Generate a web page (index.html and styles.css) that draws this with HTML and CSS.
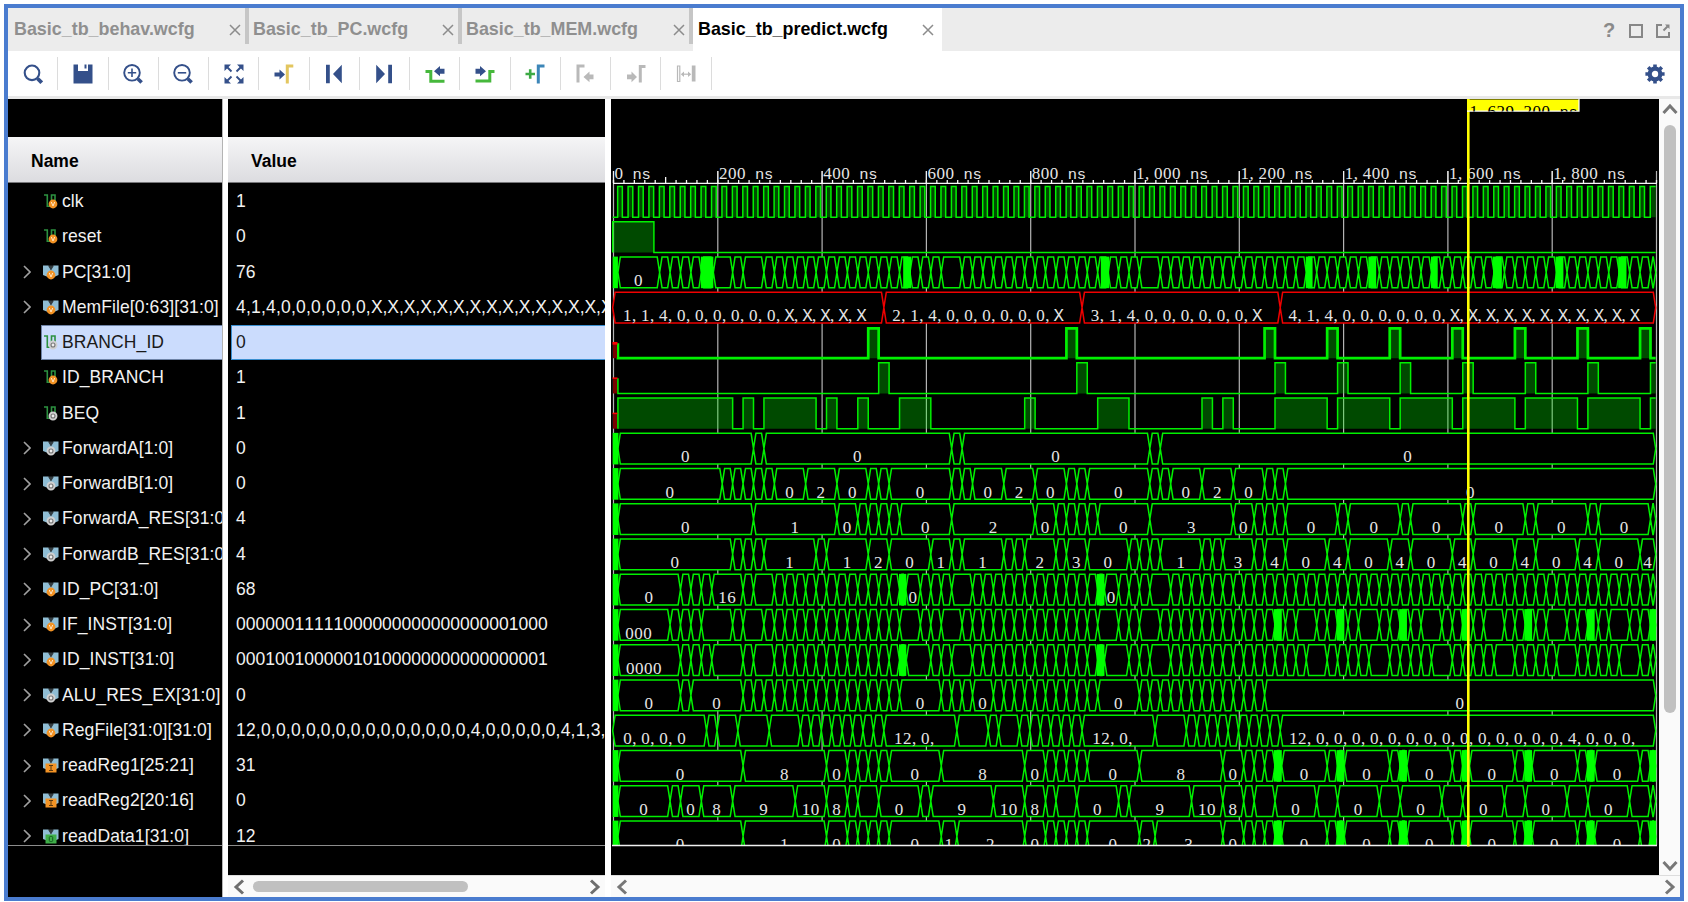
FILE: index.html
```
<!DOCTYPE html>
<html lang="en">
<head>
<meta charset="utf-8">
<title>Basic_tb_predict.wcfg</title>
<link rel="stylesheet" href="styles.css">
</head>
<body>
<svg class="defs" width="0" height="0">
  <symbol id="i-sig" viewBox="0 0 16 16"><path d="M1 2h3.300v11.300h3.400M8.500 10V2h3.500v8" fill="none" stroke="#2c9140" stroke-width="1.600"/></symbol>
  <symbol id="i-bus" viewBox="0 0 16 16"><path d="M0 1.500h5.500l2.400 4.300 2.400-4.300h5.200v9.500l-3.400 1.500h-8.400L0 11z" fill="#8fbdd4"/><path d="M5 1.500l3 5 3-5z" fill="#333c40"/></symbol>
  <symbol id="i-v" viewBox="0 0 10 10"><circle cx="5" cy="5" r="4.400" fill="#f39325"/><path d="M3.300 3l1.700 4 1.700-4" fill="none" stroke="#ffe6c4" stroke-width="1"/></symbol>
  <symbol id="i-g" viewBox="0 0 10 10"><circle cx="5" cy="5" r="3.500" fill="#777" stroke="#d0d0d0" stroke-width="1.900"/><circle cx="5" cy="5" r="1.400" fill="#eee"/></symbol>
  <symbol id="i-i" viewBox="0 0 12 10"><path d="M.5.500h11v9H.5z" fill="#f39325"/><path d="M4 2.500h4M4 7.500h4M6 2.500v5" stroke="#5d3a10" stroke-width="1"/></symbol>
  <symbol id="i-o" viewBox="0 0 12 10"><path d="M.5.500h11v9H.5z" fill="#3fae49"/><rect x="4.300" y="2.500" width="3.400" height="5" rx="1" fill="none" stroke="#145c22"/></symbol>
  <symbol id="i-x" viewBox="0 0 12 12"><path d="M1 1l10 10M11 1L1 11" stroke="#8c8c8c" stroke-width="1.500"/></symbol>
</svg>
<div class="window">
  <header class="tabs">
    <div class="tab t1"><span>Basic_tb_behav.wcfg</span><svg><use href="#i-x"/></svg></div>
    <div class="tab t2"><span>Basic_tb_PC.wcfg</span><svg><use href="#i-x"/></svg></div>
    <div class="tab t3"><span>Basic_tb_MEM.wcfg</span><svg><use href="#i-x"/></svg></div>
    <div class="tab t4 active"><span>Basic_tb_predict.wcfg</span><svg><use href="#i-x"/></svg></div>
    <div class="wincontrols">
      <span class="help">?</span>
      <svg width="14" height="14" viewBox="0 0 14 14"><path d="M1 1h12v12H1z" fill="none" stroke="#878787" stroke-width="2"/></svg>
      <svg width="14" height="14" viewBox="0 0 14 14"><path d="M6 1H1v12h12V8" fill="none" stroke="#878787" stroke-width="2"/><path d="M9 .5h4.500V5z" fill="#878787"/><path d="M7.500 6.500l4-4" stroke="#878787" stroke-width="2"/></svg>
    </div>
  </header>
  <nav class="toolbar">
    <div class="tool"><svg viewBox="0 0 20 20"><circle cx="9" cy="8.800" r="7.300" fill="none" stroke="#34508a" stroke-width="2.100"/><path d="M14.500 14.500l4.200 4.200" stroke="#34508a" stroke-width="3.800"/></svg></div>
    <div class="tool"><svg viewBox="0 0 20 20"><path d="M.5.500h4.500v6.500h10V.500h4.500v19H.5z" fill="#34508a"/><path d="M11.500.500h2v4h-2z" fill="#34508a"/></svg></div>
    <div class="tool"><svg viewBox="0 0 20 20"><circle cx="9" cy="8.800" r="7.800" fill="none" stroke="#34508a" stroke-width="1.900"/><path d="M4.800 8.800h8.400M9 4.600V13" stroke="#34508a" stroke-width="1.600"/><path d="M14.800 14.800l3.800 3.800" stroke="#34508a" stroke-width="3.600"/></svg></div>
    <div class="tool"><svg viewBox="0 0 20 20"><circle cx="9" cy="8.800" r="7.800" fill="none" stroke="#34508a" stroke-width="1.900"/><path d="M4.800 8.800h8.400" stroke="#34508a" stroke-width="1.600"/><path d="M14.800 14.800l3.800 3.800" stroke="#34508a" stroke-width="3.600"/></svg></div>
    <div class="tool"><svg viewBox="0 0 20 20"><path d="M.5.500h6.500L.5 7zM19.500.500H13L19.500 7zM.5 19.500H7L.5 13zM19.500 19.500H13l6.500-6.500z" fill="#34508a"/><path d="M3 3l4.500 4.500M17 3l-4.500 4.500M3 17l4.500-4.500M17 17l-4.500-4.500" stroke="#34508a" stroke-width="1.900"/></svg></div>
    <div class="tool"><svg viewBox="0 0 20 20"><path d="M.5 8.500h5V5.500L11 10.500l-5.500 5v-3h-5z" fill="#34508a"/><path d="M13.300 19.500V2h6" fill="none" stroke="#e3c65f" stroke-width="3"/></svg></div>
    <div class="tool"><svg viewBox="0 0 20 20"><path d="M2 .8h3.800v18.500H2zM17.800.8v18.500L9 10z" fill="#34508a"/></svg></div>
    <div class="tool"><svg viewBox="0 0 20 20"><path d="M14.200.8H18v18.500h-3.800zM2.200.8v18.500L11 10z" fill="#34508a"/></svg></div>
    <div class="tool"><svg viewBox="0 0 20 20"><path d="M19.500 4.700h-4.500V2L9 7.200l6 5.100V9.700h4.500z" fill="#34508a"/><path d="M.5 7.500h5.300v9.700h13.700" fill="none" stroke="#46b83c" stroke-width="3"/></svg></div>
    <div class="tool"><svg viewBox="0 0 20 20"><path d="M.5 4.700H5V2l6 5.200-6 5.100V9.700H.5z" fill="#34508a"/><path d="M.5 16.900h14.300V7.500h4.700" fill="none" stroke="#46b83c" stroke-width="3"/></svg></div>
    <div class="tool"><svg viewBox="0 0 20 20"><path d="M.5 10h9.500M5.200 5.200v9.600" stroke="#3daa45" stroke-width="2.600"/><path d="M13.300 19.500V2h6.200" fill="none" stroke="#3c86b8" stroke-width="3"/></svg></div>
    <div class="tool"><svg viewBox="0 0 20 20"><path d="M3 18.500V2h6.500" fill="none" stroke="#b9b9b9" stroke-width="3"/><path d="M18.500 10.500h-4V7.500l-6 5.500 6 5.300v-3h4z" fill="#b9b9b9"/></svg></div>
    <div class="tool"><svg viewBox="0 0 20 20"><path d="M1 10.500h4.500V7.500l5.500 5.500-5.500 5.300v-3H1z" fill="#b9b9b9"/><path d="M14.300 18.500V2.500h5.200" fill="none" stroke="#b9b9b9" stroke-width="3"/></svg></div>
    <div class="tool"><svg viewBox="0 0 20 20"><path d="M1.500 2h2.300v15.500H1.500z" fill="none" stroke="#b9b9b9" stroke-width="1.200"/><path d="M15.800 1.500h3.700v16h-3.700zM8 7.500v5.500L4.800 10.200zM12 7.500v5.500l3.200-2.800z" fill="#b9b9b9"/><path d="M6 10.200h8" stroke="#b9b9b9" stroke-width="1.200"/></svg></div>
    <svg class="gear" viewBox="0 0 20 20"><circle cx="10" cy="10" r="5.300" fill="none" stroke="#34508a" stroke-width="4.200"/><path d="M10 .4v4M10 15.600v4M.4 10h4M15.600 10h4M3.200 3.200L6 6M14 14l2.800 2.800M16.800 3.200L14 6M6 14l-2.800 2.800" stroke="#34508a" stroke-width="3.600"/></svg>
  </nav>
  <main class="body">
    <section class="names">
      <div class="blank"></div>
      <div class="colhead">Name</div>
      <div class="rows" id="names"></div>
    </section>
    <section class="values">
      <div class="blank"></div>
      <div class="colhead">Value</div>
      <div class="rows" id="values"></div>
      <div class="foot"></div>
      <div class="hscroll">
        <svg width="12" height="16" viewBox="0 0 12 16"><path d="M10 1.500L3 8l7 6.500" fill="none" stroke="#6e6e6e" stroke-width="3"/></svg>
        <i class="hthumb"></i>
        <svg class="right" width="12" height="16" viewBox="0 0 12 16"><path d="M2 1.500L9 8l-7 6.500" fill="none" stroke="#6e6e6e" stroke-width="3"/></svg>
      </div>
    </section>
    <section class="waves">
      <div class="upper">
        <svg id="wave" width="1048" height="776" viewBox="611 99 1048 776"></svg>
        <div class="vscroll">
          <svg width="16" height="12" viewBox="0 0 16 12"><path d="M1.500 10L8 3l6.500 7" fill="none" stroke="#777" stroke-width="3"/></svg>
          <i class="vthumb"></i>
          <svg class="down" width="16" height="12" viewBox="0 0 16 12"><path d="M1.500 2L8 9l6.500-7" fill="none" stroke="#777" stroke-width="3"/></svg>
        </div>
      </div>
      <div class="hscroll wide">
        <svg width="12" height="16" viewBox="0 0 12 16"><path d="M10 1.500L3 8l7 6.500" fill="none" stroke="#777" stroke-width="3"/></svg>
        <svg class="right" width="12" height="16" viewBox="0 0 12 16"><path d="M2 1.500L9 8l-7 6.500" fill="none" stroke="#777" stroke-width="3"/></svg>
      </div>
    </section>
  </main>
</div>
<script src="wave.js"></script>
</body>
</html>
```

FILE: styles.css
```
* { box-sizing: border-box; }
body { margin: 0; background: #fff; font-family: "Liberation Sans", Arial, sans-serif; overflow: hidden; }
.defs { display: block; position: absolute; }
.window { width: 1680px; height: 897px; margin: 4px 0 0 4px; border: 4px solid #4a7ccf; background: #fff; overflow: hidden; }
.tabs { display: flex; height: 43px; background: #ececec; }
.tab { display: flex; align-items: center; justify-content: space-between; border-right: 4px solid #c6c6c6; height: 36px; padding: 6px 4px 0 6px; font-weight: bold; font-size: 17.900px; color: #8f8f8f; white-space: nowrap; }
.tab svg { width: 12px; height: 12px; margin-top: 2px; }
.t1 { width: 241px; }
.t2 { width: 213px; padding-left: 4px; }
.t3 { width: 231px; padding-left: 4px; }
.t4 { width: 249px; height: 43px; border: 0; padding: 0 8px 1px 5px; background: #fff; color: #000; }
.wincontrols { display: flex; align-items: center; gap: 13px; margin-left: auto; margin-right: 10px; padding-top: 2px; }
.help { font-weight: bold; font-size: 20px; color: #8a8a8a; width: 13px; }
.toolbar { display: flex; align-items: center; height: 48px; border-bottom: 3px solid #e8e8e8; }
.tool { display: flex; width: 50.25px; height: 33px; justify-content: center; align-items: center; border-right: 1.500px solid #dcdcdc; }
.tool svg, .gear { width: 20px; height: 20px; }
.gear { margin-left: auto; margin-right: 15px; }
.body { display: grid; grid-template-columns: 215px 382px 1fr; height: 798px; }
.names { background: #000; border-right: 1px solid #b4b4b4; overflow: hidden; }
.values { border-left: 5px solid #fff; background: #000; overflow: hidden; }
.blank { height: 38px; }
.colhead { height: 46px; padding: 1px 23px 0; line-height: 46px; font-weight: bold; font-size: 17.500px; color: #000; background: linear-gradient(#f5f5f6, #dcdce0); border-bottom: 1px solid #77777a; }
.rows { height: 663px; padding-top: 0.600px; overflow: hidden; border-bottom: 1px solid #8c8c8c; color: #f2f2f2; font-size: 17.530px; font-kerning: none; white-space: nowrap; }
.row { display: flex; align-items: center; height: 35.250px; padding-top: 1px; }
.name { padding-left: 15px; letter-spacing: 0.100px; }
.chev { width: 8px; height: 14px; margin-right: 12px; flex: none; }
.glyph { width: 16px; height: 19px; flex: none; margin-right: 3px; }
.name .lab { display: flex; align-items: center; height: 100%; flex: 1; }
.name.selected { padding: 0 0 0 33px; }
.name.selected .lab { background: #cbdcfd; color: #1a1a1a; border: 1px solid #6e83a6; border-right: 0; padding-left: 1px; }
.value { padding-left: 8px; }
.value.selected { margin-left: 3px; padding-left: 4px; background: #cbdcfd; border: 1.500px solid #3a8fd0; border-right: 0; color: #1a1a1a; }
.value.list { letter-spacing: 0.190px; }
.value.list .x { letter-spacing: -0.060px; }
.foot { height: 29px; }
.hscroll { display: flex; align-items: center; height: 22px; background: #fafafa; border-top: 1px solid #ddd; padding: 0 4px 0 5px; }
.hthumb { width: 215px; height: 11px; border-radius: 6px; background: #c0c0c0; margin-left: 8px; }
.right { margin-left: auto; }
.waves { border-left: 6px solid #fff; }
.upper { display: flex; height: 776px; }
#wave { display: block; background: #000; flex: none; }
.vscroll { flex: 1; display: flex; flex-direction: column; align-items: center; background: #fafafa; padding: 4px 0 3px; }
.vthumb { width: 12px; height: 588px; border-radius: 6px; background: #c0c0c0; margin-top: 10px; }
.down { margin-top: auto; }
.num { font-family: "Liberation Serif", serif; font-size: 17px; fill: #e6e6e6; }
.num .m { font-family: "Liberation Mono", monospace; font-size: 15.500px; }
.num .cap { font-family: "Liberation Mono", monospace; font-size: 17.500px; }
.num.dark { fill: #000; }
```

FILE: wave.js
```
const rows = [
  ['clk', '1', 'v', 0], ['reset', '0', 'v', 0], ['PC[31:0]', '76', 'v', 1],
  ['MemFile[0:63][31:0]', '4,1,4,0,0,0,0,0,0,' + 'X,'.repeat(15), 'v', 1],
  ['BRANCH_ID', '0', 'g', 0], ['ID_BRANCH', '1', 'v', 0], ['BEQ', '1', 'g', 0],
  ['ForwardA[1:0]', '0', 'g', 1], ['ForwardB[1:0]', '0', 'g', 1],
  ['ForwardA_RES[31:0]', '4', 'g', 1], ['ForwardB_RES[31:0]', '4', 'g', 1],
  ['ID_PC[31:0]', '68', 'v', 1],
  ['IF_INST[31:0]', '00000011111000000000000000001000', 'v', 1],
  ['ID_INST[31:0]', '00010010000010100000000000000001', 'v', 1],
  ['ALU_RES_EX[31:0]', '0', 'g', 1],
  ['RegFile[31:0][31:0]', '12,' + '0,'.repeat(14) + '4,0,0,0,0,0,4,1,3,', 'v', 1],
  ['readReg1[25:21]', '31', 'i', 1], ['readReg2[20:16]', '0', 'i', 1], ['readData1[31:0]', '12', 'o', 1]
];
const badge = {
  v: x => `<use href="#i-v" x="${x}" y="7" width="10" height="10"/>`,
  g: x => `<use href="#i-g" x="${x}" y="7" width="10" height="10"/>`,
  i: () => '<use href="#i-i" x="2" y="7" width="12" height="10"/>',
  o: () => '<use href="#i-o" x="2" y="7" width="12" height="10"/>'
};
document.getElementById('names').innerHTML = rows.map(([n, , b, bus], i) => {
  const chev = i === 4 ? '' : `<svg class="chev" viewBox="0 0 8 14">${bus ? '<path d="M1 1l6 6-6 6" fill="none" stroke="#a0a0a0" stroke-width="1.6"/>' : ''}</svg>`;
  const glyph = `<svg class="glyph" viewBox="0 0 16 19"><use href="#${bus ? 'i-bus' : 'i-sig'}" x="0" y="1" width="16" height="16"/>${badge[b](bus ? 3 : 5)}</svg>`;
  const pad = i === 4 ? ' selected' : '';
  return `<div class="row name${pad}">${chev}<div class="lab">${glyph}<span>${n}</span></div></div>`;
}).join('');
document.getElementById('values').innerHTML = rows.map(([, v], i) => {
  const cls = (i === 4 ? ' selected' : '') + (v.includes(',') ? ' list' : '');
  return `<div class="row value${cls}"><span>${v.replace(/(X,)+/, '<span class="x">$&</span>')}</span></div>`;
}).join('');

// Time is counted in units of 10 ns.
const U = 5.215, X0 = 612.7;
const X = k => X0 + k * U;
const rowTop = i => 186.6 + i * 35.25;
const H = 30.6;
const GREEN = '#00f000';
const out = [];
const every = (a, b, s = 2) => { const r = []; for (let k = a; k <= b; k += s) r.push(k); return r; };

function chars(str, x, y, cls = '') {
  const xs = [...str].map((c, j) => (x + j * 9 + (c === 'X' ? -.8 : 0)).toFixed(1)).join(' ');
  const body = str.replace(/[a-z]+/g, '<tspan class="m">$&</tspan>').replace(/X/g, '<tspan class="cap">X</tspan>');
  out.push(`<text class="num ${cls}" x="${xs}" y="${y}" xml:space="preserve">${body}</text>`);
}

function bus(i, ks, labels = {}, fills = [], color = GREEN) {
  const t = rowTop(i), m = t + H / 2, b = t + H;
  let d = '';
  for (let j = 0; j < ks.length - 1; j++) {
    const a = X(ks[j]), e = X(ks[j + 1]), s = Math.min(2.4, (e - a) / 2);
    d += `M${a} ${m}L${a + s} ${t}H${e - s}L${e} ${m}L${e - s} ${b}H${a + s}Z`;
  }
  out.push(`<path d="${d}" fill="#000" stroke="${color}" stroke-width="1.5"/>`);
  for (const [a, e] of fills) out.push(`<rect x="${X(a)}" y="${t - .5}" width="${(e - a) * U}" height="${H + 1}" fill="#0f0"/>`);
  for (const key in labels) {
    const k = +key, n = ks[ks.indexOf(k) + 1], v = labels[key];
    if (Array.isArray(v)) chars(v[0], v[1], t + 29);
    else chars(v, (X(k) + X(n)) / 2 - v.length * 4.5 - .2, t + 29);
  }
}

function digital(i, pulses, w = 1.5, unknown = false) {
  const t = rowTop(i) + (w > 2 ? .8 : 0), b = rowTop(i) + H, m = (t + b) / 2;
  let d = unknown ? `M${X(1)} ${m}V${b}` : `M${X(0)} ${b}`;
  let f = '';
  for (const [a, e] of pulses) {
    d += `H${X(a)}V${t}H${X(e)}` + (e < 200 ? `V${b}` : '');
    f += `M${X(a)} ${b}V${t}H${X(e)}V${b}Z`;
  }
  if (pulses[pulses.length - 1][1] < 200) d += `H${X(200)}`;
  out.push(`<path d="${f}" fill="#00ff00" fill-opacity=".29"/><path d="${d}" fill="none" stroke="${GREEN}" stroke-width="${w}"/>`);
  if (unknown) out.push(`<rect x="613" y="${m}" width="4" height="${b - m}" fill="#700"/><path d="M612.5 ${m}h5" stroke="#f00" stroke-width="${w}"/>`);
}

// Ruler and grid
let grid = '', ticks = '';
for (let n = 0; n <= 10; n++) grid += `M${613.5 + n * 104.3} 171V845`;
for (let n = 0; n <= 100; n++) ticks += `M${613.5 + n * 10.43} ${n === 5 ? 177 : 180}V183`;
out.push(`<path d="${grid}" stroke="#b4b4b4" stroke-width="1.2"/>`);
out.push(`<path d="${ticks}M613 183.300H1657" stroke="#f6f6f6" stroke-width="1.300"/>`);
['0', '200', '400', '600', '800', '1,000', '1,200', '1,400', '1,600', '1,800'].forEach((s, n) => {
  out.push(`<path d="M${613.5 + n * 104.3} 171V183" stroke="#f0f0f0" stroke-width="1.2"/>`);
  chars(s + ' ns', 614.6 + n * 104.3, 179);
});

out.push('<clipPath id="view"><rect x="611" y="184" width="1047" height="661"/></clipPath><g clip-path="url(#view)">');
digital(0, every(0, 99, 1).map(n => [2 * n + .95, n === 99 ? 200 : 2 * n + 1.85]));
digital(1, [[0, 7.9]]);
bus(2, [1, 9, 11, 13, 15, 17, 19.3, 23, 25, ...every(29, 63), ...every(67, 99), ...every(101, 101), ...every(105, 199), 200],
  { 1: '0' }, [[0, 1], [16.9, 19.3], [55.7, 57.2], [93.6, 95.2], [132.9, 134.2], [144.9, 146.4], [156.9, 158.2], [168.8, 170.5], [180.8, 182.3], [192.8, 194.4]]);
bus(3, [0, 52, 90, 128, 200], {
  0: ['1,1,4,0,0,0,0,0,0,X,X,X,X,X', 623], 52: ['2,1,4,0,0,0,0,0,0,X', 892.3],
  90: ['3,1,4,0,0,0,0,0,0,X', 1090.700], 128: ['4,1,4,0,0,0,0,0,0,X,X,X,X,X,X,X,X,X,X,X', 1288.500]
}, [], '#f00000');
const loop = [137, 149, 161, 173, 185, 197];
digital(4, [49, 87, 125, ...loop].map(k => [k, k + 2]), 2.7, true);
digital(5, [51, 89, 127, 139, 151, 163, 175, 187, 199].map(k => [k, Math.min(200, k + 2)]), 1.5, true);
digital(6, [[1, 23], [25, 27], [29, 39], [41, 43], [47, 49], [55, 61], [79, 81], [93, 99], [113, 115], [117, 119],
  [127, 137], [139, 149], [151, 161], [163, 173], [175, 185], [187, 197], [199, 200]], 1.5, true);
const start = [[0, 1.1]];
bus(7, [1, 27, 29, 65, 67, 103, 105, 200], { 1: '0', 29: '0', 67: '0', 105: '0' }, start);
bus(8, [1, 21, 23, 25, 27, 29, 31, 37, 43, 49, 51, 53, 65, 67, 69, 75, 81, 87, 89, 91, 103, 105, 107, 113, 119, 125, 127, 129, 200],
  { 1: '0', 31: '0', 37: '2', 43: '0', 53: '0', 69: '0', 75: '2', 81: '0', 91: '0', 107: '0', 113: '2', 119: '0', 129: '0' }, start);
bus(9, [1, 27, 43, 47, 49, 51, 53, 55, 65, 81, 85, 87, 89, 91, 93, 103, 119, 123, 125, 127, 129, 139, 141, 151, 153, 163, 165, 175, 177, 187, 189, 199, 200],
  { 1: '0', 27: '1', 43: '0', 55: '0', 65: '2', 81: '0', 93: '0', 103: '3', 119: '0', 129: '0', 141: '0', 153: '0', 165: '0', 177: '0', 189: '0' }, start);
bus(10, [1, 23, 25, 27, 29, 39, 41, 49, 53, 61, 65, 67, 75, 77, 79, 85, 87, 91, 99, 101, 103, 105, 113, 115, 117, 123, 125, 129, 137, 141, 149, 153, 161, 165, 173, 177, 185, 189, 197, 200],
  { 1: '0', 29: '1', 41: '1', 49: '2', 53: '0', 61: '1', 67: '1', 79: '2', 87: '3', 91: '0', 105: '1', 117: '3', 125: '4', 129: '0', 137: '4', 141: '0', 149: '4', 153: '0', 161: '4', 165: '0', 173: '4', 177: '0', 185: '4', 189: '0', 197: '4' }, start);
bus(11, [1, 13, 15, 17, 19, 25, 27, ...every(31, 55), 56.2, 59, 61, 63, 65, ...every(69, 93), 94.3, 97, 99, 101, 103, ...every(107, 199), 200],
  { 1: '0', 19: '16', 56.2: '0', 94.3: '0' }, [...start, [54.9, 56.3], [92.8, 94.3]]);
const fills = [126.8, 138.8, 150.8, 162.8, 174.8, 186.8].map(k => [k, k + 1.5]).concat([[198.8, 200.1]]);
bus(12, [1, 11, 13, 15, 17, 23, 25, ...every(29, 55), 59, 61, 63, ...every(67, 93), 97, 99, 101, ...every(105, 127), 129, 131, 135, 137, 139,
  141, 143, 147, 149, 151, 153, 155, 159, 161, 163, 165, 167, 171, 173, 175, 177, 179, 183, 185, 187, 189, 191, 195, 197, 199, 200],
  { 1: ['000', 625.300] }, [...start, ...fills]);
bus(13, [1, 13, 15, 17, 19, 25, 27, ...every(31, 55), 56.3, 61, 63, 65, ...every(69, 93), 94.3, 99, 101, 103, ...every(107, 133),
  137, 139, 141, 143, 145, 149, 151, 153, 155, 157, 161, 163, 165, 167, 169, 173, 175, 177, 179, 181, 185, 187, 189, 191, 193, 197, 199, 200],
  { 1: ['0000', 626] }, [...start, [54.9, 56.3], [92.8, 94.3]]);
bus(14, [1, 13, 15, ...every(25, 55), 63, 65, 67, 69, ...every(73, 93), ...every(101, 125), 200],
  { 1: '0', 15: '0', 55: '0', 69: '0', 93: '0', 125: '0' }, start);
bus(15, [0, 18, 20, 24, 30, ...every(36, 52), 66, 72, 74, ...every(78, 90), 104, ...every(110, 128), 200],
  { 0: ['0,0,0,0', 623.300], 52: ['12,0,', 894], 90: ['12,0,', 1092.300], 128: ['12,' + '0,'.repeat(14) + '4,0,0,0,', 1289] });
const tail = [127, 128.3, 137, 139, 140.3, 149, 151, 152.3, 161, 163, 164.3, 173, 175, 176.3, 185, 187, 188.3, 197, 199, 200];
const tailLabels = { 128.3: '0', 140.3: '0', 152.3: '0', 164.3: '0', 176.3: '0', 188.3: '0' };
bus(16, [1, 25, 41, 45, 47, 49, 51, 53, 63, 79, 83, 85, 87, 89, 91, 101, 117, 121, 123, 125, ...tail],
  { 1: '0', 25: '8', 41: '0', 53: '0', 63: '8', 79: '0', 91: '0', 101: '8', 117: '0', ...tailLabels }, [...start, ...fills]);
bus(17, [1, 11, 13, 17, 23, 35, 41, 45, 47, 51, 59, 61, 73, 79, 83, 85, 89, 97, 99, 111, 117, 121, 123, 127, 135, 139, 147, 151, 159, 163, 171, 175, 183, 187, 195, 199, 200],
  { 1: '0', 13: '0', 17: '8', 23: '9', 35: '10', 41: '8', 51: '0', 61: '9', 73: '10', 79: '8', 89: '0', 99: '9', 111: '10', 117: '8', 127: '0', 139: '0', 151: '0', 163: '0', 175: '0', 187: '0' }, start);
bus(18, [1, 25, 41, 45, 47, 49, 51, 53, 63, 66, 79, 83, 85, 87, 89, 91, 101, 104, 117, 121, 123, 125, ...tail],
  { 1: '0', 25: '1', 41: '0', 53: '0', 63: '1', 66: '2', 79: '0', 91: '0', 101: '2', 104: '3', 117: '0', ...tailLabels }, [...start, ...fills]);
out.push('</g><path d="M612 845.500H1657" stroke="#f0f0f0" stroke-width="1.400"/>');

// Time cursor with its flag
out.push('<path d="M1468.300 99V846.500" stroke="#ff0" stroke-width="2.600"/><rect x="1467" y="99.500" width="112" height="11.500" fill="#ff0"/><path d="M1579 99V111.200H1467" fill="none" stroke="#fff" stroke-width="1.200"/>');
out.push('<clipPath id="flag"><rect x="1467" y="99" width="112" height="12.500"/></clipPath><g clip-path="url(#flag)">');
chars('1,629.200 ns', 1469.5, 117, 'dark');
out.push('</g>');
document.getElementById('wave').innerHTML = out.join('');
```
